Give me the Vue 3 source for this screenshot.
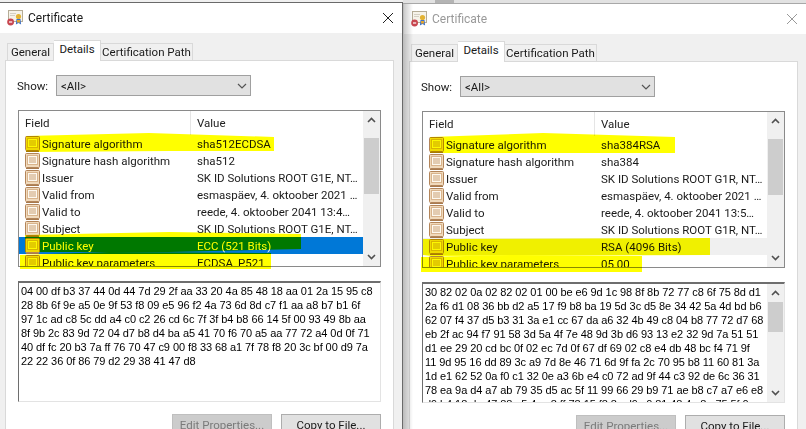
<script setup>
const fields = [
  'Signature algorithm',
  'Signature hash algorithm',
  'Issuer',
  'Valid from',
  'Valid to',
  'Subject',
  'Public key',
  'Public key parameters'
]

const dialogs = [
  {
    id: 'ecc',
    active: true,
    values: [
      'sha512ECDSA',
      'sha512',
      'SK ID Solutions ROOT G1E, NT…',
      'esmaspäev, 4. oktoober 2021 …',
      'reede, 4. oktoober 2041 13:4…',
      'SK ID Solutions ROOT G1E, NT…',
      'ECC (521 Bits)',
      'ECDSA_P521'
    ],
    marks: [
      '7,25 130,22 255,26 255,40 150,40 7,41',
      '6,124 150,121 282,123 282,138 150,141 6,141',
      '1,144 90,141 252,142 252,158 100,158 1,158'
    ],
    hex: [
      '04 00 df b3 37 44 0d 44 7d 29 2f aa 33 20 4a 85 48 18 aa 01 2a 15 95 c8',
      '28 8b 6f 9e a5 0e 9f 53 f8 09 e5 96 f2 4a 73 6d 8d c7 f1 aa a8 b7 b1 6f',
      '97 1c ad c8 5c dd a4 c0 c2 26 cd 6c 7f 3f b4 b8 66 14 5f 00 93 49 8b aa',
      '8f 9b 2c 83 9d 72 04 d7 b8 d4 ba a5 41 70 f6 70 a5 aa 77 72 a4 0d 0f 71',
      '40 df fc 20 b3 7a ff 76 70 47 c9 00 f8 33 68 a1 7f 78 f8 20 3c bf 00 d9 7a',
      '22 22 36 0f 86 79 d2 29 38 41 47 d8'
    ]
  },
  {
    id: 'rsa',
    active: false,
    values: [
      'sha384RSA',
      'sha384',
      'SK ID Solutions ROOT G1R, NT…',
      'esmaspäev, 4. oktoober 2021 …',
      'reede, 4. oktoober 2041 13:5…',
      'SK ID Solutions ROOT G1R, NT…',
      'RSA (4096 Bits)',
      '05 00'
    ],
    marks: [
      '7,25 120,21 252,25 252,41 130,41 7,41',
      '0,127 287,126 287,143 8,144 0,143',
      '-2,145 90,143 219,144 219,160 -2,160'
    ],
    hex: [
      '30 82 02 0a 02 82 02 01 00 be e6 9d 1c 98 8f 8b 72 77 c8 6f 75 8d d1',
      '2a f6 d1 08 36 bb d2 a5 17 f9 b8 ba 19 5d 3c d5 8e 34 42 5a 4d bd b6',
      '62 07 f4 37 d5 b3 31 3a e1 cc 67 da a6 32 4b 49 c8 04 b8 77 72 d7 68',
      'eb 2f ac 94 f7 91 58 3d 5a 4f 7e 48 9d 3b d6 93 13 e2 32 9d 7a 51 51',
      'd1 ee 29 20 cd bc 0f 02 ec 7d 0f 67 df 69 02 c8 e4 db 48 bc f4 71 9f',
      '11 9d 95 16 dd 89 3c a9 7d 8e 46 71 6d 9f fa 2c 70 95 b8 11 60 81 3a',
      '1d e1 62 52 0a f0 c1 32 0e a3 6b e4 c0 72 ad 9f 44 c3 92 de 6c 36 31',
      '78 ea 9a d4 a7 ab 79 35 d5 ac 5f 11 99 66 29 b9 71 ae b8 c7 a7 e6 e8',
      'd9 b4 18 de 47 88 a5 4e c8 ff 78 15 f8 8a d9 c0 81 48 4a 8e 75 5f 0a'
    ]
  }
]
</script>

<template>
  <div class="screen">
    <section
      v-for="d in dialogs"
      :key="d.id"
      class="dialog"
      :class="{ inactive: !d.active }"
    >
      <header class="titlebar">
        <svg class="cert-icon" width="16" height="16" viewBox="0 0 16 16">
          <rect x="1.5" y="0.5" width="14" height="11" fill="#f6f3ea" stroke="#b5ac96" />
          <rect x="3" y="3" width="6" height="1" fill="#d5d0c4" />
          <rect x="3" y="5" width="5" height="1" fill="#d5d0c4" />
          <circle cx="11.5" cy="6.5" r="2.6" fill="#e3b334" />
          <path d="M9.5 9l-.6 5.5 2.6-1.5 2.6 1.5-.6-5.5z" fill="#3f71c4" />
          <rect x="10" y="10" width="3" height="2.5" fill="#e2a52c" />
          <circle cx="3.6" cy="12" r="3.4" fill="#c8464f" />
          <path d="M2 12h3.2" stroke="#fff" stroke-width="1.2" />
        </svg>
        <span class="title">Certificate</span>
        <svg class="close" width="12" height="12" viewBox="0 0 12 12">
          <path d="M1 1l10 10M11 1L1 11" stroke="currentColor" fill="none" />
        </svg>
      </header>

      <div class="body">
        <nav class="tabs">
          <span class="tab first">General</span>
          <span class="tab current">Details</span>
          <span class="tab">Certification Path</span>
        </nav>

        <div class="panel">
          <div class="show-row">
            <label>Show:</label>
            <div class="select">
              <span>&lt;All&gt;</span>
              <svg width="10" height="6" viewBox="0 0 10 6">
                <path d="M1 1l4 4 4-4" stroke="#555" stroke-width="1.2" fill="none" />
              </svg>
            </div>
          </div>

          <div class="list">
            <div class="list-main">
              <div class="list-head">
                <span class="col-field">Field</span>
                <span class="col-value">Value</span>
              </div>
              <div
                v-for="(field, i) in fields"
                :key="field"
                class="row"
                :class="{ selected: i === 6 }"
              >
                <span class="col-field">
                  <svg class="field-icon" width="15" height="16" viewBox="0 0 15 16">
                    <rect x="0.5" y="0.5" width="14" height="14" rx="1" fill="#f0d9bb" stroke="#b3855a" />
                    <rect x="2.5" y="2.5" width="10" height="9" fill="#fdf8ef" stroke="#d9b48c" />
                    <path d="M4 5h7M4 7h7M4 9h7" stroke="#c99f72" />
                    <rect x="1" y="15" width="13" height="1" fill="#a87a4e" />
                  </svg>
                  <span class="field-name">{{ field }}</span>
                </span>
                <span class="col-value">{{ d.values[i] }}</span>
              </div>
            </div>
            <div class="scrollbar">
              <svg class="arrow" width="9" height="6" viewBox="0 0 9 6">
                <path d="M1 5l3.5-3.5L8 5" stroke="#505050" stroke-width="1.6" fill="none" />
              </svg>
              <div class="thumb"></div>
              <svg class="arrow down" width="9" height="6" viewBox="0 0 9 6">
                <path d="M1 1l3.5 3.5L8 1" stroke="#505050" stroke-width="1.6" fill="none" />
              </svg>
            </div>
            <svg class="marker" width="362" height="160" viewBox="0 0 362 160">
              <polygon v-for="m in d.marks" :key="m" :points="m" fill="#ffff00" />
            </svg>
          </div>

          <div class="hexbox">
            <div class="hex">
              <div v-for="line in d.hex" :key="line">{{ line }}</div>
            </div>
            <div v-if="!d.active" class="scrollbar hex-scroll">
              <svg class="arrow" width="9" height="6" viewBox="0 0 9 6">
                <path d="M1 5l3.5-3.5L8 5" stroke="#505050" stroke-width="1.6" fill="none" />
              </svg>
              <div class="thumb"></div>
              <svg class="arrow down" width="9" height="6" viewBox="0 0 9 6">
                <path d="M1 1l3.5 3.5L8 1" stroke="#505050" stroke-width="1.6" fill="none" />
              </svg>
            </div>
          </div>

          <div class="buttons">
            <button class="btn" disabled>Edit Properties...</button>
            <button class="btn">Copy to File...</button>
          </div>
        </div>
      </div>
      <div v-if="!d.active" class="shadow"></div>
    </section>
  </div>
</template>

<style>
html, body {
  margin: 0;
  background: #f0f0f0;
}
</style>

<style scoped>
.screen {
  width: 806px;
  height: 429px;
  overflow: hidden;
  display: flex;
  background: #f0f0f0;
  font-family: Roboto, "Open Sans", sans-serif;
  font-size: 11.5px;
  color: #1a1a1a;
}

.dialog {
  position: relative;
  box-sizing: border-box;
  width: 403px;
  height: 440px;
  margin-top: 2px;
  border-top: 1px solid #6a6a6a;
  border-right: 1px solid #6a6a6a;
  background: #f0f0f0;
}

.dialog.inactive {
  margin-top: 3px;
  border-top-color: #a8a8a8;
  border-right: none;
  padding-left: 1px;
}

.dialog.inactive::before {
  content: "";
  position: absolute;
  left: 0;
  right: 0;
  top: -4px;
  height: 3px;
  background: linear-gradient(to right, #e2e2e2 32px, #b4b4b4 32px, #b4b4b4 51px, #e2e2e2 51px);
}

.titlebar {
  height: 30px;
  background: #fff;
  display: flex;
  align-items: center;
  padding-left: 7px;
  padding-right: 8px;
}

.cert-icon {
  margin-right: 5px;
}

.title {
  font-size: 12px;
}

.inactive .title,
.inactive .close {
  color: #999;
}

.close {
  margin-left: auto;
  color: #222;
}

.body {
  padding: 7px 8px 0 5px;
}

.tabs {
  display: flex;
  align-items: flex-end;
  height: 20px;
  padding-left: 2px;
}

.tab {
  box-sizing: border-box;
  height: 17px;
  line-height: 17px;
  border: 1px solid #d9d9d9;
  border-bottom: none;
  border-left: none;
  background: #f0f0f0;
  text-align: center;
  white-space: nowrap;
}

.tab.first {
  border-left: 1px solid #d9d9d9;
  width: 47px;
}

.tab.current {
  width: 47px;
  height: 21px;
  line-height: 17px;
  margin-bottom: -1px;
  background: #fff;
  position: relative;
  z-index: 1;
}

.tab:last-child {
  width: 92px;
}

.panel {
  box-sizing: border-box;
  height: 400px;
  border: 1px solid #d9d9d9;
  background: #fff;
  padding: 14px 12px 0;
}

.show-row {
  display: flex;
  align-items: center;
  height: 21px;
}

.show-row label {
  width: 39px;
  margin-left: -1px;
}

.select {
  box-sizing: border-box;
  width: 195px;
  height: 21px;
  border: 1px solid #a0a0a0;
  background: #e1e1e1;
  display: flex;
  align-items: center;
  justify-content: space-between;
  padding: 0 3px 0 4px;
}

.list {
  position: relative;
  box-sizing: border-box;
  width: 363px;
  height: 157px;
  margin-top: 14px;
  border: 1px solid #8a8a8a;
  display: flex;
  overflow: visible;
}

.list-main {
  flex: 1;
  min-width: 0;
  height: 155px;
  overflow: hidden;
}

.list-head {
  display: flex;
  height: 24px;
  align-items: center;
  color: #222;
}

.list-head .col-field {
  box-sizing: border-box;
  flex: none;
  width: 172px;
  border-right: 1px solid #e5e5e5;
  height: 24px;
  line-height: 24px;
  padding-left: 6px;
}

.list-head .col-value {
  padding-left: 6px;
}

.row {
  display: flex;
  height: 17px;
  line-height: 17px;
  white-space: nowrap;
}

.row.selected {
  background: #0078d7;
  color: #fff;
}

.inactive .row.selected {
  background: #f0f0f0;
  color: #1a1a1a;
}

.row .col-field {
  box-sizing: border-box;
  flex: none;
  width: 172px;
  padding-left: 6px;
  display: flex;
  align-items: center;
  gap: 2px;
}

.field-name {
  margin-top: 2px;
}

.row .col-value {
  padding-left: 6px;
  min-width: 0;
  line-height: 19px;
}

.field-icon {
  flex: none;
}

.scrollbar {
  width: 17px;
  flex: none;
  background: #f0f0f0;
  display: flex;
  flex-direction: column;
  align-items: center;
  position: relative;
}

.arrow {
  margin-top: 6px;
  flex: none;
}

.thumb {
  width: 15px;
  height: 56px;
  margin-top: 15px;
  background: #cdcdcd;
}

.arrow.down {
  margin-top: auto;
  margin-bottom: 6px;
}

.marker {
  position: absolute;
  left: 0;
  top: 0;
  overflow: visible;
  mix-blend-mode: multiply;
  pointer-events: none;
}

.hexbox {
  box-sizing: border-box;
  width: 363px;
  height: 121px;
  margin-top: 14px;
  border: 1px solid;
  border-color: #6e6e6e #e3e3e3 #e3e3e3 #6e6e6e;
  border-top-width: 2px;
  display: flex;
  overflow: hidden;
  background: #fff;
}

.hex {
  flex: 1;
  min-width: 0;
  padding: 1px 0 0 2px;
  font-family: "Liberation Sans", Arial, sans-serif;
  font-size: 11px;
  letter-spacing: -0.08px;
  line-height: 14px;
  color: #000;
  white-space: nowrap;
  overflow: hidden;
}

.hex-scroll .thumb {
  height: 30px;
  margin-top: 6px;
}

.buttons {
  display: flex;
  justify-content: flex-end;
  gap: 9px;
  margin-top: 12px;
}

.btn {
  box-sizing: border-box;
  width: 100px;
  height: 23px;
  padding: 0 0 2px;
  font: inherit;
  color: #1a1a1a;
  background: #e1e1e1;
  border: 1px solid #adadad;
}

.btn:disabled {
  background: #ccc;
  border-color: #bfbfbf;
  color: #7a7a7a;
}

.shadow {
  position: absolute;
  left: 0;
  top: 0;
  bottom: 0;
  width: 10px;
  background: linear-gradient(to right, rgba(0, 0, 0, 0.22), rgba(0, 0, 0, 0));
}
</style>
